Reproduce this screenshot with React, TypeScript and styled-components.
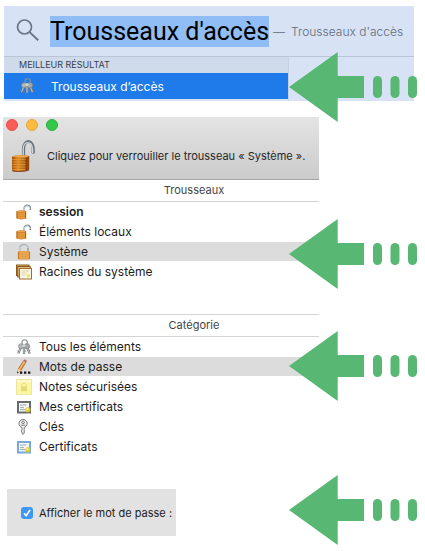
import React, { useState } from "react";
import styled, { createGlobalStyle } from "styled-components";

const GlobalStyle = createGlobalStyle`
  *, *::before, *::after { box-sizing: border-box; }
  body {
    margin: 0;
    background: #fff;
    color: #1c1c1c;
    font-family: Inter, "Liberation Sans", sans-serif;
    font-size: 12px;
  }
  button, input { font: inherit; color: inherit; }
  h2 { margin: 0; font: inherit; }
`;

const Page = styled.main`
  display: flex;
  flex-direction: column;
  gap: 16px;
  min-width: 400px;
  padding: 6px 11px 14px 3px;
`;

const Section = styled.section`
  position: relative;
`;

const Pointer = styled.svg<{ $top: number }>`
  position: absolute;
  top: ${(p) => p.$top}px;
  right: -3px;
  width: 128px;
  height: 70px;
  fill: #58b773;
  pointer-events: none;
`;

const Spotlight = styled.div`
  margin-left: 1px;
  background: #d7e3f5;
`;

const SearchBar = styled.label`
  display: flex;
  align-items: center;
  height: 51px;
  padding-left: 11px;
  border-bottom: 1px solid #b9c6da;
  white-space: nowrap;
`;

const SearchInput = styled.input`
  field-sizing: content;
  height: 31px;
  margin: 0 4px 0 10px;
  padding: 0;
  border: 0;
  outline: 0;
  background: #90bdf6;
  color: #000;
  font-family: Roboto, "Liberation Sans", sans-serif;
  font-size: 25px;
  line-height: 31px;
`;

const Completion = styled.span`
  display: flex;
  gap: 6px;
  color: #5f6b78;
  font-size: 12px;
  font-weight: 300;
`;

const Results = styled.div`
  width: 285px;
  padding-bottom: 2px;
  border-right: 1px solid #c5d1e3;
`;

const ResultsTitle = styled.h2`
  height: 16px;
  padding-left: 15px;
  background: #cfdaea;
  color: #363f4d;
  font-size: 9px;
  line-height: 15px;
`;

const Result = styled.button`
  display: flex;
  align-items: center;
  gap: 16px;
  width: 100%;
  height: 26px;
  padding: 0 0 0 15px;
  border: 0;
  background: #1f7aea;
  color: #fff;
  text-align: left;
`;

const KeychainWindow = styled.div`
  margin-right: 95px;
`;

const TitleBar = styled.header`
  display: flex;
  flex-direction: column;
  height: 63px;
  padding: 2px 3px 0;
  border-bottom: 1px solid #a5a5a5;
  background: linear-gradient(#e4e4e4, #cbcbcb);
`;

const WindowControls = styled.div`
  display: flex;
  gap: 8px;
`;

const WindowControl = styled.button<{ $color: string; $edge: string }>`
  width: 12px;
  height: 12px;
  padding: 0;
  border: 1px solid ${(p) => p.$edge};
  border-radius: 50%;
  background: ${(p) => p.$color};
`;

const LockButton = styled.button`
  display: flex;
  align-items: center;
  gap: 5px;
  height: 34px;
  margin-top: 8px;
  padding: 0 0 0 4px;
  border: 0;
  background: none;
  color: #262626;
  font-size: 11px;
  white-space: nowrap;
`;

const Group = styled.div`
  & + & { margin-top: 33px; border-top: 1px solid #d4d4d4; }
`;

const GroupTitle = styled.h2`
  height: 22px;
  padding-left: 66px;
  border-bottom: 1px solid #d4d4d4;
  color: #444;
  font-size: 11px;
  line-height: 21px;
  text-align: center;
`;

const List = styled.ul`
  display: flex;
  flex-direction: column;
  gap: 1px;
  margin: 0;
  padding: 0;
  list-style: none;
`;

const Item = styled.button<{ $selected: boolean; $bold?: boolean }>`
  display: flex;
  align-items: center;
  gap: 7px;
  width: 100%;
  height: 19px;
  padding: 0 0 0 13px;
  border: 0;
  background: ${(p) => (p.$selected ? "#dcdcdc" : "transparent")};
  font-weight: ${(p) => (p.$bold ? 600 : 400)};
  text-align: left;
`;

const Icon = styled.svg<{ $size?: number }>`
  flex: none;
  display: block;
  width: ${(p) => p.$size ?? 16}px;
  height: ${(p) => p.$size ?? 16}px;
`;

const OptionSection = styled(Section)`
  margin-top: 17px;
  padding-left: 4px;
`;

const Option = styled.label`
  display: flex;
  align-items: center;
  gap: 6px;
  width: 169px;
  height: 47px;
  padding-left: 14px;
  background: #e2e2e2;
  font-size: 11px;
  white-space: nowrap;
`;

const CheckWrap = styled.span`
  display: grid;
  & > * { grid-area: 1 / 1; }
  & > svg { pointer-events: none; }
`;

const Check = styled.input`
  appearance: none;
  width: 12px;
  height: 12px;
  margin: 0;
  border-radius: 3px;
  background: #fff;
  &:checked { background: #3e97f6; }
`;

const Arrow = ({ top }: { top: number }) => (
  <Pointer $top={top} viewBox="0 0 128 70" aria-hidden="true">
    <path d="M0 35 48.7 0V24H75V46H48.7V70Z" />
    <rect x="84" y="24" width="9" height="22" rx="4.5" />
    <rect x="101.5" y="24" width="9" height="22" rx="4.5" />
    <rect x="119" y="24" width="9" height="22" rx="4.5" />
  </Pointer>
);

const SearchIcon = () => (
  <Icon $size={25} viewBox="0 0 25 25" fill="none" stroke="#697687" strokeWidth="1.7">
    <circle cx="9.5" cy="8" r="7" />
    <path d="m14.6 13.1 8.6 8.2" strokeWidth="2" />
  </Icon>
);

const KeysIcon = () => (
  <Icon viewBox="0 0 16 16">
    <circle cx="8.6" cy="3.4" r="2.7" fill="none" stroke="#8b9090" strokeWidth="1.1" />
    <path d="M5.4 7.5 2.3 14.4M8 7v8M10.8 7.5l2.8 7" stroke="#7b8081" strokeWidth="2.3" />
    <path d="M5.2 8 2.5 14M8 8v6.5M10.8 8l2.6 6" stroke="#c6caca" strokeWidth="1" />
    <circle cx="5" cy="7.3" r="2.5" fill="#b3b8b8" stroke="#767b7b" strokeWidth=".6" />
    <circle cx="11" cy="7.3" r="2.7" fill="#a3a9a9" stroke="#767b7b" strokeWidth=".6" />
    <circle cx="8" cy="6.6" r="1.6" fill="#d0d3d3" />
    <path d="m1.5 12 1.8 1M12.8 11.8l1.6-.6M8.5 12h1.7" stroke="#7c8181" />
  </Icon>
);

const OpenLockIcon = () => (
  <Icon viewBox="0 0 16 16">
    <path d="M8.2 7.2V4.7C8.2.2 14.3.3 14.3 4.7V6" fill="none" stroke="#8a949c" strokeWidth="1.7" />
    <path d="M8.2 7V4.7C8.2 1 13.8 1 13.9 5" fill="none" stroke="#e3e7ea" strokeWidth=".9" />
    <path d="M.5 6.9Q5.3 5.7 10.2 6.9v7.7Q5.3 16.2.5 14.6Z" fill="#d58225" />
    <path d="M1 7.8Q5.3 6.8 9.8 7.8M1 9.8h8.8M1 11.8h8.8M1 13.8h8.8" fill="none" stroke="#f0b259" strokeWidth=".8" />
    <path d="M9.5 7.5v7M1 7.5v7" stroke="#a9601c" strokeWidth=".9" />
  </Icon>
);

const ClosedLockIcon = () => (
  <Icon viewBox="0 0 16 16">
    <path d="M4 8V4.7c0-4.9 8-4.9 8 0V8" fill="none" stroke="#a2a9ae" strokeWidth="1.9" />
    <path d="M4 7V4.7C4 .8 11.5.9 11.7 4" fill="none" stroke="#eceeef" strokeWidth=".9" />
    <rect x="2" y="7" width="12" height="8.5" rx="1.2" fill="#de8f35" />
    <path d="M2.6 8h10.8M2.6 10h10.8M2.6 12h10.8M2.6 14h10.8" stroke="#f3bf75" strokeWidth=".8" />
    <path d="M2.4 8v7M13.6 8v7" stroke="#b86b20" strokeWidth=".7" />
  </Icon>
);

const RootsIcon = () => (
  <Icon viewBox="0 0 16 16">
    <rect x=".5" y="1" width="12.5" height="10.5" fill="#d9ae67" stroke="#8c5a20" />
    <rect x="1.7" y="2.5" width="12.5" height="10.5" fill="#e4bc79" stroke="#8c5a20" />
    <rect x="3.5" y="4.5" width="12" height="10.5" fill="#fbf4df" stroke="#a36c2c" />
    <path d="M6 7h7M5.5 9h5M5.5 11h4" stroke="#d3c5a3" strokeWidth=".7" />
    <circle cx="12.3" cy="11.8" r="1.7" fill="#efe273" />
  </Icon>
);

const PencilIcon = () => (
  <Icon viewBox="0 0 16 16">
    <path d="M1.5 14 2.4 9.8 7.5 1.8 10 3.4 4.9 11.4Z" fill="#e58c35" stroke="#925422" strokeWidth=".6" />
    <path d="m3.5 10.5 4.8-7.8" stroke="#ffd06f" />
    <path d="m7.5 1.8.6-1.1c.8-.9 3.1.5 2.6 1.5L10 3.4Z" fill="#d3655c" />
    <path d="m6.9 2.8 2.5 1.6" stroke="#c7ced4" />
    <path d="M1.2 14.2 2.3 9.8l2.6 1.6Z" fill="#f3d8ae" />
    <path d="m1 14.4.4-2 1.3.9Z" fill="#222" />
    <path d="M4 12.5h2.3v2.3H4zM8 12.5h2.3v2.3H8zM12 12.5h2.3v2.3H12z" fill="#111" />
  </Icon>
);

const NoteIcon = () => (
  <Icon viewBox="0 0 16 16">
    <rect x=".5" y=".5" width="15" height="15" fill="#fcf6a0" stroke="#ece5a3" />
    <path d="M1 1h14v2.5H1z" fill="#fdf9c9" />
    <path d="M6 8V6.2c0-2.8 4-2.8 4 0V8" fill="none" stroke="#e2d985" />
    <rect x="5" y="7.5" width="6" height="4.8" fill="#e4da7c" />
  </Icon>
);

const CertificateIcon = ({ frame }: { frame: string }) => (
  <Icon viewBox="0 0 16 16">
    <rect x="2" y="3" width="12" height="10.5" fill="#f4f7f7" stroke={frame} strokeWidth="2" />
    <path d="M4 6.2h3l1-.7 1 .8 1.5-.5M4 8.6h4M4 10.6h5" fill="none" stroke="#8f959b" strokeWidth=".8" />
    <circle cx="11.8" cy="10.8" r="2.6" fill="#d9c928" />
    <circle cx="11.4" cy="10.3" r="1.4" fill="#f3e86b" />
  </Icon>
);

const KeyIcon = () => (
  <Icon viewBox="0 0 16 16" fill="#f4f4f4" stroke="#6b6b6b" strokeWidth=".9">
    <path d="M6 8.5A4.1 4.1 0 1 1 8.2 8.5V14L7.1 15.4 6 14.5V13L5 12.2 6 11.4Z" />
    <circle cx="7.1" cy="3.4" r="1.3" />
    <path d="M4.9 6.2h4.4" />
  </Icon>
);

const BigLockIcon = () => (
  <Icon $size={32} viewBox="0 0 32 32">
    <defs>
      <linearGradient id="brass">
        <stop offset="0" stopColor="#a65008" />
        <stop offset=".35" stopColor="#dc8a24" />
        <stop offset="1" stopColor="#914205" />
      </linearGradient>
    </defs>
    <path d="M13.5 17V9.5C13.5-1 23.2-1 23.2 9.5V13.5" fill="none" stroke="#68737d" strokeWidth="3.2" />
    <path d="M13.2 16V9.5C13.2.5 22 .2 22.6 9.5V13" fill="none" stroke="#d1dbe3" strokeWidth="1.3" />
    <path d="M2 16.5Q8 14.2 19.2 16V29.8Q12 32.8 2 30.8Z" fill="url(#brass)" />
    <path d="M2 16.5Q8 14 19.2 16l-3 1.5Q8 18 2 16.5Z" fill="#eba749" />
    <path d="M2.3 19.5h13.6M2.3 22h13.6M2.3 24.5h13.6M2.3 27h13.6M2.3 29.5h13.6" stroke="#f0aa4c" strokeWidth=".6" />
    <path d="M16.2 17.5v13.2M2.5 31Q12 32.6 19 30" fill="none" stroke="#6c2e06" strokeWidth=".8" />
  </Icon>
);

type Entry = { name: string; icon: React.ReactNode; bold?: boolean };

const keychains: Entry[] = [
  { name: "session", icon: <OpenLockIcon />, bold: true },
  { name: "Éléments locaux", icon: <OpenLockIcon /> },
  { name: "Système", icon: <ClosedLockIcon /> },
  { name: "Racines du système", icon: <RootsIcon /> },
];

const categories: Entry[] = [
  { name: "Tous les éléments", icon: <KeysIcon /> },
  { name: "Mots de passe", icon: <PencilIcon /> },
  { name: "Notes sécurisées", icon: <NoteIcon /> },
  { name: "Mes certificats", icon: <CertificateIcon frame="#666b70" /> },
  { name: "Clés", icon: <KeyIcon /> },
  { name: "Certificats", icon: <CertificateIcon frame="#78a9dc" /> },
];

function SidebarGroup({ title, entries, initial }: { title: string; entries: Entry[]; initial: string }) {
  const [selected, setSelected] = useState(initial);
  return (
    <Group>
      <GroupTitle>{title}</GroupTitle>
      <List>
        {entries.map((e) => (
          <li key={e.name}>
            <Item
              type="button"
              $selected={selected === e.name}
              $bold={e.bold}
              aria-pressed={selected === e.name}
              onClick={() => setSelected(e.name)}
            >
              {e.icon}
              {e.name}
            </Item>
          </li>
        ))}
      </List>
    </Group>
  );
}

export default function App() {
  return (
    <>
      <GlobalStyle />
      <Page>
        <Section>
          <Spotlight>
            <SearchBar>
              <SearchIcon />
              <SearchInput type="text" aria-label="Recherche Spotlight" defaultValue="Trousseaux d'accès" spellCheck={false} />
              <Completion>
                <span>—</span>
                <span>Trousseaux d'accès</span>
              </Completion>
            </SearchBar>
            <Results>
              <ResultsTitle>MEILLEUR RÉSULTAT</ResultsTitle>
              <Result type="button">
                <KeysIcon />
                Trousseaux d’accès
              </Result>
            </Results>
          </Spotlight>
          <Arrow top={46} />
        </Section>
        <Section>
          <KeychainWindow>
            <TitleBar>
              <WindowControls>
                <WindowControl type="button" aria-label="Fermer" $color="#fc5b57" $edge="#e6504c" />
                <WindowControl type="button" aria-label="Réduire" $color="#fdbc40" $edge="#e3a53a" />
                <WindowControl type="button" aria-label="Agrandir" $color="#34c84a" $edge="#2bb03d" />
              </WindowControls>
              <LockButton type="button">
                <BigLockIcon />
                Cliquez pour verrouiller le trousseau « Système ».
              </LockButton>
            </TitleBar>
            <SidebarGroup title="Trousseaux" entries={keychains} initial="Système" />
            <SidebarGroup title="Catégorie" entries={categories} initial="Mots de passe" />
          </KeychainWindow>
          <Arrow top={102} />
          <Arrow top={214} />
        </Section>
        <OptionSection>
          <Option>
            <CheckWrap>
              <Check type="checkbox" defaultChecked />
              <Icon $size={12} viewBox="0 0 12 12" fill="none" stroke="#fff" strokeWidth="1.7">
                <path d="m3 6.3 2.2 2.4L9 3" />
              </Icon>
            </CheckWrap>
            Afficher le mot de passe :
          </Option>
          <Arrow top={-14} />
        </OptionSection>
      </Page>
    </>
  );
}
